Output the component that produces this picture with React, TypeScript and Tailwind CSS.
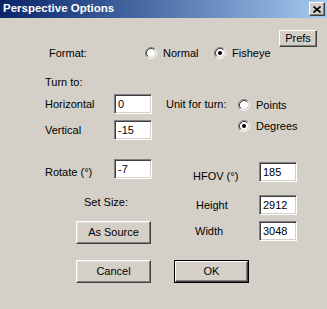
import React from "react";

// win2000-ish radio
function Radio({ checked }: { checked?: boolean }) {
  return (
    <svg width="12" height="12" viewBox="0 0 12 12" className="shrink-0">
      <path d="M2.11 9.89A5.5 5.5 0 0 1 9.89 2.11" fill="none" stroke="#808080" />
      <path d="M9.89 2.11A5.5 5.5 0 0 1 2.11 9.89" fill="none" stroke="#ffffff" />
      <circle cx="6" cy="6" r="4" fill="#ffffff" />
      <path d="M2.82 9.18A4.5 4.5 0 0 1 9.18 2.82" fill="none" stroke="#404040" />
      <path d="M9.18 2.82A4.5 4.5 0 0 1 2.82 9.18" fill="none" stroke="#d4d0c8" />
      {checked && <circle cx="6" cy="6" r="2" fill="#000000" />}
    </svg>
  );
}

function Option({ label, checked, className }: { label: string; checked?: boolean; className?: string }) {
  return (
    <div className={`flex items-center gap-[6px] ${className ?? ""}`}>
      <Radio checked={checked} />
      <span className="leading-[14px]">{label}</span>
    </div>
  );
}

function Field({ value }: { value: string }) {
  return (
    <div className="w-[38px] h-[20px] bg-white border border-t-[#808080] border-l-[#808080] border-b-white border-r-white shadow-[inset_1px_1px_0_#404040,inset_-1px_-1px_0_#d4d0c8] pl-[3px] flex items-center leading-none">
      {value}
    </div>
  );
}

function Button({ label }: { label: string }) {
  return (
    <div className="w-[75px] h-[23px] flex items-center justify-center border border-t-white border-l-white border-b-[#404040] border-r-[#404040] shadow-[inset_-1px_-1px_0_#808080,inset_1px_1px_0_#dfdfdf]">
      {label}
    </div>
  );
}

function DefaultButton({ label }: { label: string }) {
  return (
    <div className="w-[75px] h-[23px] border border-black flex">
      <div className="flex-1 flex items-center justify-center border border-t-white border-l-white border-b-[#404040] border-r-[#404040] shadow-[inset_-1px_-1px_0_#808080]">
        {label}
      </div>
    </div>
  );
}

export default function App() {
  return (
    <div className="w-[327px] h-[309px] overflow-hidden bg-[#d4d0c8] text-[11px] text-black font-['Liberation_Sans',Arial,sans-serif]">
      {/* title bar */}
      <div className="h-[18px] flex items-center justify-between pl-[3px] pr-[2px] bg-gradient-to-r from-[#0a246a] to-[#a6caf0]">
        <span className="text-white font-bold text-[11.5px] leading-none">Perspective Options</span>
        <div className="w-[16px] h-[14px] flex items-center justify-center bg-[#d4d0c8] border border-t-white border-l-white border-b-[#404040] border-r-[#404040] shadow-[inset_-1px_-1px_0_#808080]">
          <svg width="8" height="7" viewBox="0 0 8 7">
            <path d="M0.5 0.5L7.5 6.5M7.5 0.5L0.5 6.5" stroke="#000" strokeWidth="1.6" />
          </svg>
        </div>
      </div>

      <div className="mt-[12px] flex justify-end pr-[10px]">
        <div className="w-[38px] h-[17px] flex items-center justify-center border border-t-white border-l-white border-b-[#404040] border-r-[#404040] shadow-[inset_-1px_-1px_0_#808080]">
          Prefs
        </div>
      </div>

      <div className="h-[12px] flex items-center">
        <span className="ml-[49px] w-[96px]">Format:</span>
        <Option label="Normal" className="w-[69px]" />
        <Option label="Fisheye" checked />
      </div>

      <div className="mt-[16px] h-[14px] pl-[45px] flex items-center">Turn to:</div>

      <div className="mt-[5px] flex pl-[45px]">
        <div className="flex flex-col gap-[6px]">
          <div className="flex items-center">
            <span className="w-[69px]">Horizontal</span>
            <Field value="0" />
          </div>
          <div className="flex items-center">
            <span className="w-[69px]">Vertical</span>
            <Field value="-15" />
          </div>
        </div>
        <div className="ml-[14px] w-[72px] h-[20px] flex items-center">Unit for turn:</div>
        <div className="mt-[4px] flex flex-col gap-[7px]">
          <Option label="Points" />
          <Option label="Degrees" checked />
        </div>
      </div>

      <div className="mt-[19px] flex">
        <div className="w-[193px] pl-[45px]">
          <div className="flex h-[20px]">
            <span className="w-[69px] mt-[5px]">Rotate (°)</span>
            <Field value="-7" />
          </div>
          <div className="mt-[16px] h-[14px] pl-[39px] flex items-center">Set Size:</div>
          <div className="mt-[12px] pl-[31px]">
            <Button label="As Source" />
          </div>
        </div>
        <div>
          <div className="mt-[3px] flex h-[20px]">
            <span className="w-[66px] mt-[6px]">HFOV (°)</span>
            <Field value="185" />
          </div>
          <div className="mt-[13px] flex items-center">
            <span className="w-[66px] pl-[3px]">Height</span>
            <Field value="2912" />
          </div>
          <div className="mt-[6px] flex items-center">
            <span className="w-[66px] pl-[2px]">Width</span>
            <Field value="3048" />
          </div>
        </div>
      </div>

      <div className="mt-[16px] flex pl-[76px] gap-[23px]">
        <Button label="Cancel" />
        <DefaultButton label="OK" />
      </div>
    </div>
  );
}
